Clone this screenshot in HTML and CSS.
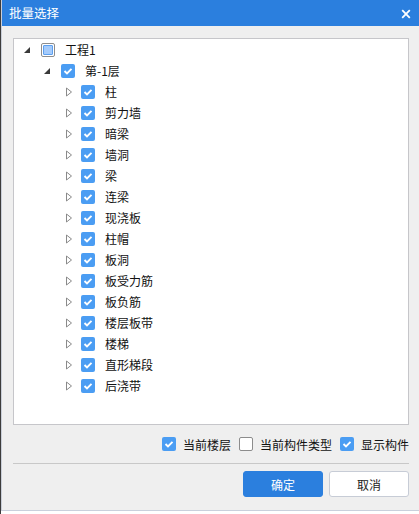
FILE: index.html
```html
<!DOCTYPE html>
<html lang="zh">
<head>
<meta charset="utf-8">
<link rel="stylesheet" href="styles.css">
</head>
<body>
<div class="screen">
  <div class="dialog">
    <div class="titlebar">
      <span class="title">批量选择</span>
      <svg class="close" width="10" height="10" viewBox="0 0 10 10"><path d="M1.2 1.2 L8.8 8.8 M8.8 1.2 L1.2 8.8" stroke="#fff" stroke-width="1.8" fill="none"/></svg>
    </div>
    <div class="content">
      <div class="tree">
        <div class="row lv0">
          <span class="exp"><svg width="8" height="8" viewBox="0 0 8 8"><polygon points="7,1 7,7 1,7" fill="#3a3a3a"/></svg></span>
          <span class="cb partial"><span class="inner"></span></span>
          <span class="label">工程1</span>
        </div>
        <div class="row lv1">
          <span class="exp"><svg width="8" height="8" viewBox="0 0 8 8"><polygon points="7,1 7,7 1,7" fill="#3a3a3a"/></svg></span>
          <span class="cb on"><svg width="14" height="14" viewBox="0 0 14 14"><path d="M3.5 7 L6 9.5 L10.5 4.8" stroke="#fff" stroke-width="1.9" fill="none"/></svg></span>
          <span class="label">第-1层</span>
        </div>
        <div class="row lv2"><span class="exp"><svg width="8" height="10" viewBox="0 0 8 10"><polygon points="1.5,1 6.5,5 1.5,9" stroke="#8a8a8a" stroke-width="1" fill="none"/></svg></span><span class="cb on"><svg width="14" height="14" viewBox="0 0 14 14"><path d="M3.5 7 L6 9.5 L10.5 4.8" stroke="#fff" stroke-width="1.9" fill="none"/></svg></span><span class="label">柱</span></div>
        <div class="row lv2"><span class="exp"><svg width="8" height="10" viewBox="0 0 8 10"><polygon points="1.5,1 6.5,5 1.5,9" stroke="#8a8a8a" stroke-width="1" fill="none"/></svg></span><span class="cb on"><svg width="14" height="14" viewBox="0 0 14 14"><path d="M3.5 7 L6 9.5 L10.5 4.8" stroke="#fff" stroke-width="1.9" fill="none"/></svg></span><span class="label">剪力墙</span></div>
        <div class="row lv2"><span class="exp"><svg width="8" height="10" viewBox="0 0 8 10"><polygon points="1.5,1 6.5,5 1.5,9" stroke="#8a8a8a" stroke-width="1" fill="none"/></svg></span><span class="cb on"><svg width="14" height="14" viewBox="0 0 14 14"><path d="M3.5 7 L6 9.5 L10.5 4.8" stroke="#fff" stroke-width="1.9" fill="none"/></svg></span><span class="label">暗梁</span></div>
        <div class="row lv2"><span class="exp"><svg width="8" height="10" viewBox="0 0 8 10"><polygon points="1.5,1 6.5,5 1.5,9" stroke="#8a8a8a" stroke-width="1" fill="none"/></svg></span><span class="cb on"><svg width="14" height="14" viewBox="0 0 14 14"><path d="M3.5 7 L6 9.5 L10.5 4.8" stroke="#fff" stroke-width="1.9" fill="none"/></svg></span><span class="label">墙洞</span></div>
        <div class="row lv2"><span class="exp"><svg width="8" height="10" viewBox="0 0 8 10"><polygon points="1.5,1 6.5,5 1.5,9" stroke="#8a8a8a" stroke-width="1" fill="none"/></svg></span><span class="cb on"><svg width="14" height="14" viewBox="0 0 14 14"><path d="M3.5 7 L6 9.5 L10.5 4.8" stroke="#fff" stroke-width="1.9" fill="none"/></svg></span><span class="label">梁</span></div>
        <div class="row lv2"><span class="exp"><svg width="8" height="10" viewBox="0 0 8 10"><polygon points="1.5,1 6.5,5 1.5,9" stroke="#8a8a8a" stroke-width="1" fill="none"/></svg></span><span class="cb on"><svg width="14" height="14" viewBox="0 0 14 14"><path d="M3.5 7 L6 9.5 L10.5 4.8" stroke="#fff" stroke-width="1.9" fill="none"/></svg></span><span class="label">连梁</span></div>
        <div class="row lv2"><span class="exp"><svg width="8" height="10" viewBox="0 0 8 10"><polygon points="1.5,1 6.5,5 1.5,9" stroke="#8a8a8a" stroke-width="1" fill="none"/></svg></span><span class="cb on"><svg width="14" height="14" viewBox="0 0 14 14"><path d="M3.5 7 L6 9.5 L10.5 4.8" stroke="#fff" stroke-width="1.9" fill="none"/></svg></span><span class="label">现浇板</span></div>
        <div class="row lv2"><span class="exp"><svg width="8" height="10" viewBox="0 0 8 10"><polygon points="1.5,1 6.5,5 1.5,9" stroke="#8a8a8a" stroke-width="1" fill="none"/></svg></span><span class="cb on"><svg width="14" height="14" viewBox="0 0 14 14"><path d="M3.5 7 L6 9.5 L10.5 4.8" stroke="#fff" stroke-width="1.9" fill="none"/></svg></span><span class="label">柱帽</span></div>
        <div class="row lv2"><span class="exp"><svg width="8" height="10" viewBox="0 0 8 10"><polygon points="1.5,1 6.5,5 1.5,9" stroke="#8a8a8a" stroke-width="1" fill="none"/></svg></span><span class="cb on"><svg width="14" height="14" viewBox="0 0 14 14"><path d="M3.5 7 L6 9.5 L10.5 4.8" stroke="#fff" stroke-width="1.9" fill="none"/></svg></span><span class="label">板洞</span></div>
        <div class="row lv2"><span class="exp"><svg width="8" height="10" viewBox="0 0 8 10"><polygon points="1.5,1 6.5,5 1.5,9" stroke="#8a8a8a" stroke-width="1" fill="none"/></svg></span><span class="cb on"><svg width="14" height="14" viewBox="0 0 14 14"><path d="M3.5 7 L6 9.5 L10.5 4.8" stroke="#fff" stroke-width="1.9" fill="none"/></svg></span><span class="label">板受力筋</span></div>
        <div class="row lv2"><span class="exp"><svg width="8" height="10" viewBox="0 0 8 10"><polygon points="1.5,1 6.5,5 1.5,9" stroke="#8a8a8a" stroke-width="1" fill="none"/></svg></span><span class="cb on"><svg width="14" height="14" viewBox="0 0 14 14"><path d="M3.5 7 L6 9.5 L10.5 4.8" stroke="#fff" stroke-width="1.9" fill="none"/></svg></span><span class="label">板负筋</span></div>
        <div class="row lv2"><span class="exp"><svg width="8" height="10" viewBox="0 0 8 10"><polygon points="1.5,1 6.5,5 1.5,9" stroke="#8a8a8a" stroke-width="1" fill="none"/></svg></span><span class="cb on"><svg width="14" height="14" viewBox="0 0 14 14"><path d="M3.5 7 L6 9.5 L10.5 4.8" stroke="#fff" stroke-width="1.9" fill="none"/></svg></span><span class="label">楼层板带</span></div>
        <div class="row lv2"><span class="exp"><svg width="8" height="10" viewBox="0 0 8 10"><polygon points="1.5,1 6.5,5 1.5,9" stroke="#8a8a8a" stroke-width="1" fill="none"/></svg></span><span class="cb on"><svg width="14" height="14" viewBox="0 0 14 14"><path d="M3.5 7 L6 9.5 L10.5 4.8" stroke="#fff" stroke-width="1.9" fill="none"/></svg></span><span class="label">楼梯</span></div>
        <div class="row lv2"><span class="exp"><svg width="8" height="10" viewBox="0 0 8 10"><polygon points="1.5,1 6.5,5 1.5,9" stroke="#8a8a8a" stroke-width="1" fill="none"/></svg></span><span class="cb on"><svg width="14" height="14" viewBox="0 0 14 14"><path d="M3.5 7 L6 9.5 L10.5 4.8" stroke="#fff" stroke-width="1.9" fill="none"/></svg></span><span class="label">直形梯段</span></div>
        <div class="row lv2"><span class="exp"><svg width="8" height="10" viewBox="0 0 8 10"><polygon points="1.5,1 6.5,5 1.5,9" stroke="#8a8a8a" stroke-width="1" fill="none"/></svg></span><span class="cb on"><svg width="14" height="14" viewBox="0 0 14 14"><path d="M3.5 7 L6 9.5 L10.5 4.8" stroke="#fff" stroke-width="1.9" fill="none"/></svg></span><span class="label">后浇带</span></div>
      </div>
      <div class="options">
        <span class="cb on"><svg width="14" height="14" viewBox="0 0 14 14"><path d="M3.5 7 L6 9.5 L10.5 4.8" stroke="#fff" stroke-width="1.9" fill="none"/></svg></span><span class="opt-label">当前楼层</span>
        <span class="cb off"></span><span class="opt-label">当前构件类型</span>
        <span class="cb on"><svg width="14" height="14" viewBox="0 0 14 14"><path d="M3.5 7 L6 9.5 L10.5 4.8" stroke="#fff" stroke-width="1.9" fill="none"/></svg></span><span class="opt-label last">显示构件</span>
      </div>
      <div class="sep"></div>
      <div class="buttons">
        <button class="btn primary">确定</button>
        <button class="btn">取消</button>
      </div>
    </div>
  </div>
</div>
</body>
</html>
```
FILE: styles.css
```css
html, body {
  margin: 0;
  padding: 0;
  background: #ffffff;
}
body {
  width: 419px;
  height: 514px;
  overflow: hidden;
  font-family: "Noto Sans CJK SC", "Noto Sans", sans-serif;
  font-size: 12px;
  color: #111;
}
.screen {
  width: 419px;
  height: 514px;
  border-left: 1px solid #3c3c3c;
  box-sizing: border-box;
}
.dialog {
  width: 418px;
  height: 511px;
  background: #efefef;
  border-left: 1px solid #c9ced8;
  border-bottom: 1px solid #c9d0dc;
  box-sizing: border-box;
  display: flex;
  flex-direction: column;
}
.titlebar {
  height: 26px;
  background: #2b7fde;
  display: flex;
  align-items: center;
  justify-content: space-between;
  padding: 0 8px 0 7px;
  flex: none;
}
.title {
  color: #fff;
  font-size: 12.5px;
  line-height: 26px;
}
.close {
  display: block;
  margin-top: 1px;
}
.content {
  flex: 1;
  display: flex;
  flex-direction: column;
  padding: 12px 10px 0 11px;
}
.tree {
  height: 387px;
  background: #fff;
  border: 1px solid #c6c6ca;
  box-sizing: border-box;
  flex: none;
}
.row {
  height: 21px;
  display: flex;
  align-items: center;
}
.row.lv0 { padding-left: 8px; }
.row.lv1 { padding-left: 28px; }
.row.lv2 { padding-left: 48px; }
.exp {
  width: 14px;
  height: 13px;
  margin-right: 5px;
  display: flex;
  align-items: center;
  justify-content: center;
}
.exp svg { display: block; }
.lv0 .exp, .lv1 .exp { justify-content: flex-start; padding-left: 1px; box-sizing: border-box; }
.cb {
  width: 14px;
  height: 14px;
  box-sizing: border-box;
  border-radius: 2px;
  flex: none;
  display: block;
}
.cb svg { display: block; }
.cb.on {
  background: #4b9df3;
}
.cb.off {
  background: #fff;
  border: 1px solid #8c8c8c;
}
.cb.partial {
  border: 1.5px solid #8d8d8d;
  background: #fff;
  border-radius: 2px;
  padding: 1px;
}
.cb.partial .inner {
  display: block;
  width: 100%;
  height: 100%;
  box-sizing: border-box;
  background: #a5cbfb;
  border: 1px solid #5d9fee;
  border-radius: 1px;
}
.label {
  margin-left: 10px;
  white-space: nowrap;
  line-height: 21px;
}
.options {
  height: 38px;
  display: flex;
  align-items: center;
  justify-content: flex-end;
  padding-right: 0;
}
.opt-label {
  margin-left: 7px;
  margin-right: 8px;
  white-space: nowrap;
}
.opt-label.last { margin-right: 0; }
.sep {
  height: 1px;
  background: #c8c8c8;
  flex: none;
}
.buttons {
  display: flex;
  justify-content: flex-end;
  gap: 6px;
  padding-top: 7px;
}
.btn {
  width: 80px;
  height: 26px;
  border-radius: 3px;
  border: 1px solid #c7ccd6;
  background: #fff;
  font-family: "Noto Sans CJK SC", "Noto Sans", sans-serif;
  font-size: 12px;
  color: #222;
  padding: 0;
}
.btn.primary {
  background: #2b7fde;
  border-color: #2b7fde;
  color: #fff;
}
```
